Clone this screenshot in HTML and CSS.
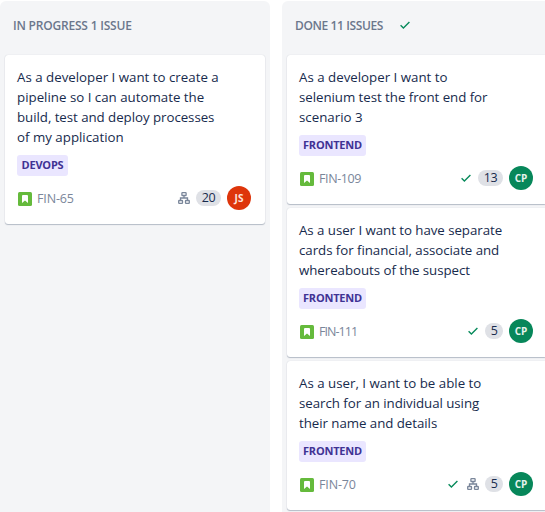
FILE: index.html
```
<!DOCTYPE html>
<html lang="en">
<head>
<meta charset="utf-8">
<title>Board</title>
<link rel="stylesheet" href="styles.css">
</head>
<body>
<svg width="0" height="0" class="defs">
  <symbol id="check" viewBox="0 0 12 10"><path d="M1.6 5.2 4.4 7.9 10.4 2" fill="none" stroke="#078a5b" stroke-width="1.4"/></symbol>
  <symbol id="story" viewBox="0 0 14 14"><rect width="14" height="14" rx="1.5" fill="#65ba3c"/><path d="M4 4a1 1 0 0 1 1-1h4a1 1 0 0 1 1 1v7L7 8.4 4 11z" fill="#fff"/></symbol>
  <symbol id="tree" viewBox="0 0 12 12"><g fill="none" stroke="#7a869a" stroke-width="1.3"><rect x="3.9" y=".7" width="4.2" height="2.8" rx=".6"/><rect x=".7" y="8.5" width="3.8" height="2.8" rx=".6"/><rect x="7.5" y="8.5" width="3.8" height="2.8" rx=".6"/><path d="M6 3.4V6M2.5 8.6V6h7v2.6"/></g></symbol>
</svg>
<main class="board">
  <section class="column">
    <header class="column-header"><span class="title">IN PROGRESS 1 ISSUE</span></header>
    <article class="card">
      <p class="summary">As a developer I want to create a<br>pipeline so I can automate the<br><span class="tight">build, test and deploy processes</span><br>of my application</p>
      <span class="tag devops">DEVOPS</span>
      <footer class="meta"><svg class="story"><use href="#story"/></svg><span class="key">FIN-65</span><svg class="tree"><use href="#tree"/></svg><span class="points wide">20</span><span class="avatar red">JS</span></footer>
    </article>
  </section>
  <section class="column">
    <header class="column-header"><span class="title done">DONE 11 ISSUES</span><svg class="check"><use href="#check"/></svg></header>
    <article class="card">
      <p class="summary">As a developer I want to<br><span class="tight">selenium test the front end for</span><br>scenario 3</p>
      <span class="tag">FRONTEND</span>
      <footer class="meta"><svg class="story"><use href="#story"/></svg><span class="key narrow">FIN-109</span><svg class="check"><use href="#check"/></svg><span class="points wide">13</span><span class="avatar">CP</span></footer>
    </article>
    <article class="card">
      <p class="summary"><span class="tight">As a user I want to have separate</span><br><span class="tight">cards for financial, associate and</span><br><span class="tight">whereabouts of the suspect</span></p>
      <span class="tag">FRONTEND</span>
      <footer class="meta"><svg class="story"><use href="#story"/></svg><span class="key ones">FIN-111</span><svg class="check"><use href="#check"/></svg><span class="points">5</span><span class="avatar">CP</span></footer>
    </article>
    <article class="card">
      <p class="summary">As a user, I want to be able to<br><span class="tight">search for an individual using</span><br><span class="tight">their name and details</span></p>
      <span class="tag">FRONTEND</span>
      <footer class="meta"><svg class="story"><use href="#story"/></svg><span class="key">FIN-70</span><svg class="check"><use href="#check"/></svg><svg class="tree"><use href="#tree"/></svg><span class="points">5</span><span class="avatar">CP</span></footer>
    </article>
  </section>
</main>
</body>
</html>
```
FILE: styles.css
```
* { box-sizing: border-box; }
body { margin: 0; background: #fff; overflow: hidden; font-family: "Open Sans", "Segoe UI", sans-serif; color: #172b4d; }
.defs { display: none; }
.board { display: flex; gap: 12px; height: 512px; padding-top: 1px; }
.column { flex: 0 0 270px; display: flex; flex-direction: column; gap: 4px; padding: 0 5px; background: #f4f5f7; border-radius: 6px 6px 0 0; }
.column-header { display: flex; align-items: center; height: 50px; padding: 0 0 2px 8px; font-size: 12px; font-weight: 600; color: #6b778c; white-space: nowrap; }
.title { letter-spacing: -.2px; }
.done { letter-spacing: -.38px; }
.column-header .check { margin-left: 15.5px; }
.card { flex: none; padding: 12px 14px 14px 12px; background: #fff; border-radius: 3px; box-shadow: 0 1px 1px rgba(9, 30, 66, .25), 0 0 1px rgba(9, 30, 66, .2); }
.summary { margin: 0 0 8px; font-size: 13.3px; line-height: 20px; white-space: nowrap; }
.tight { letter-spacing: -.05px; }
.tag { display: block; width: 67px; height: 21px; border-radius: 3px; background: #eae6ff; color: #403294; font-size: 11px; font-weight: 700; letter-spacing: -.2px; line-height: 20px; text-align: center; }
.devops { width: 51px; }
.meta { display: flex; align-items: center; height: 24px; margin-top: 10px; }
.story { width: 14px; height: 14px; margin: 1px 5px 0 1px; }
.key { margin-right: auto; font-size: 12.5px; color: #7a869a; letter-spacing: -.15px; }
.narrow { letter-spacing: -.4px; }
.ones { letter-spacing: -.95px; }
.check { width: 12px; height: 10px; margin-right: 6px; }
.tree { width: 12px; height: 12px; margin-right: 6px; }
.check + .tree { margin-left: 2px; }
.points { width: 18px; height: 16px; margin-right: 6px; border-radius: 8px; background: #dfe1e6; font-size: 12.5px; letter-spacing: -.4px; line-height: 16px; text-align: center; }
.wide { width: 25px; }
.avatar { width: 24px; height: 24px; border-radius: 50%; background: #07875a; color: #e6f3ee; font-size: 10px; font-weight: 700; line-height: 24px; text-align: center; }
.red { background: #de350b; color: #fce4de; }
```
